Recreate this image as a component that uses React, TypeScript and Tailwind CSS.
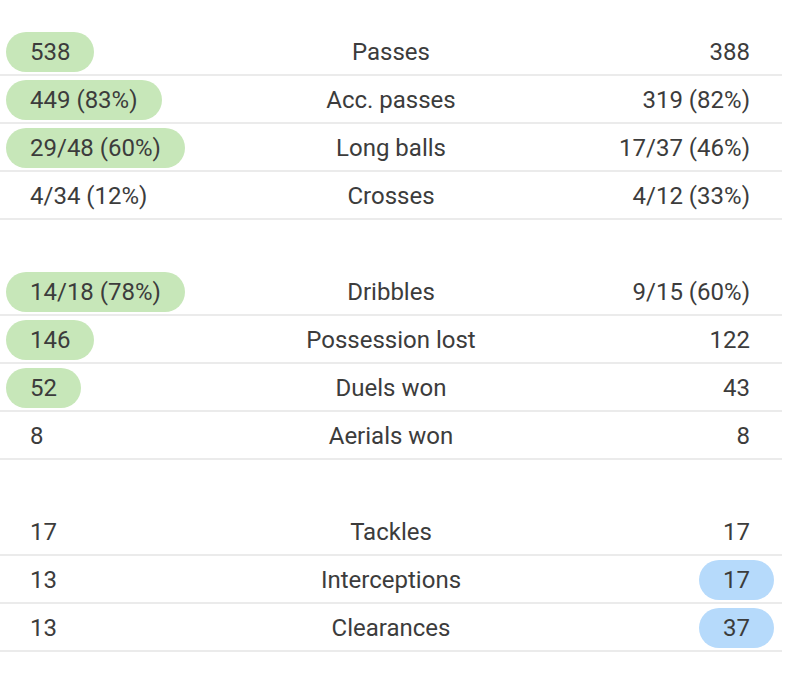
import * as React from "react";

type Row = { home: string; label: string; away: string; win?: "home" | "away" };

const groups: Row[][] = [
  [
    { home: "538", label: "Passes", away: "388", win: "home" },
    { home: "449 (83%)", label: "Acc. passes", away: "319 (82%)", win: "home" },
    { home: "29/48 (60%)", label: "Long balls", away: "17/37 (46%)", win: "home" },
    { home: "4/34 (12%)", label: "Crosses", away: "4/12 (33%)" },
  ],
  [
    { home: "14/18 (78%)", label: "Dribbles", away: "9/15 (60%)", win: "home" },
    { home: "146", label: "Possession lost", away: "122", win: "home" },
    { home: "52", label: "Duels won", away: "43", win: "home" },
    { home: "8", label: "Aerials won", away: "8" },
  ],
  [
    { home: "17", label: "Tackles", away: "17" },
    { home: "13", label: "Interceptions", away: "17", win: "away" },
    { home: "13", label: "Clearances", away: "37", win: "away" },
  ],
];

function Value({ text, highlight }: { text: string; highlight?: string }) {
  return (
    <span
      className={`inline-flex items-center h-10 px-6 rounded-full ${highlight ?? ""}`}
    >
      {text}
    </span>
  );
}

function StatRow({ row }: { row: Row }) {
  return (
    <div className="grid grid-cols-[1fr_auto_1fr] items-center h-12 pt-0.5 border-b-2 border-[#ebebeb]">
      <div className="pl-1.5">
        <Value text={row.home} highlight={row.win === "home" ? "bg-[#c7e7b9]" : ""} />
      </div>
      <div className="text-center">{row.label}</div>
      <div className="flex justify-end pr-2">
        <Value text={row.away} highlight={row.win === "away" ? "bg-[#b6dafb]" : ""} />
      </div>
    </div>
  );
}

export default function App() {
  return (
    <div
      className="w-[782px] pt-7 text-[24px] leading-none text-[#3c3c3c] bg-white"
      style={{ fontFamily: "Roboto, 'Liberation Sans', sans-serif" }}
    >
      <div className="flex flex-col gap-12">
        {groups.map((g, i) => (
          <div key={i}>
            {g.map((row) => (
              <StatRow key={row.label} row={row} />
            ))}
          </div>
        ))}
      </div>
    </div>
  );
}
